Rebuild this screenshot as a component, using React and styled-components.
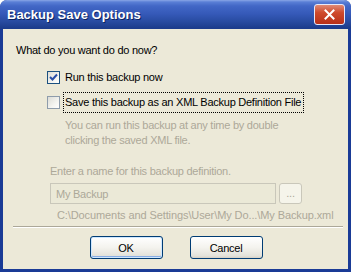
import React from 'react';
import styled, { createGlobalStyle } from 'styled-components';

const GlobalStyle = createGlobalStyle`
  html, body {
    margin: 0;
    padding: 0;
    background: #ffffff;
  }
  body {
    font-family: Tahoma, "Liberation Sans", "DejaVu Sans", sans-serif;
    font-size: 11px;
    letter-spacing: -0.25px;
    color: #000;
  }
`;

const Window = styled.div`
  width: 351px;
  height: 272px;
  box-sizing: border-box;
  display: flex;
  flex-direction: column;
  background: #1a3b96;
  border-radius: 7px 7px 0 0;
  overflow: hidden;
`;

const TitleBar = styled.div`
  height: 29px;
  flex-shrink: 0;
  display: flex;
  align-items: center;
  justify-content: space-between;
  padding: 0 6px 0 7px;
  background: linear-gradient(
    to bottom,
    #8aa6e6 0px,
    #5a7fd6 2px,
    #4267c6 6px,
    #3559b8 14px,
    #274a9f 22px,
    #1c3c8c 28px
  );
`;

const Title = styled.span`
  font-family: "Liberation Sans", "DejaVu Sans", sans-serif;
  font-weight: bold;
  font-size: 13px;
  letter-spacing: 0;
  color: #ffffff;
  text-shadow: 1px 1px 0 #0d2460;
`;

const CloseButton = styled.div`
  width: 31px;
  height: 21px;
  box-sizing: border-box;
  border: 1px solid #e8e8f8;
  border-radius: 3px;
  background: linear-gradient(to bottom, #e08a76 0%, #cf4a2c 40%, #b93018 100%);
  display: flex;
  align-items: center;
  justify-content: center;
`;

const Client = styled.div`
  flex: 1;
  margin: 0 3px 3px 3px;
  background: #ece9d8;
  display: flex;
  flex-direction: column;
  padding: 14px 0 0 10px;
`;

const Question = styled.div`
  line-height: 14px;
  margin-left: 3px;
`;

const Options = styled.div`
  margin: 11px 0 0 34px;
  display: flex;
  flex-direction: column;
  gap: 6px;
`;

const CheckRow = styled.div`
  display: flex;
  align-items: center;
  height: 19px;
`;

const Box = styled.div`
  width: 13px;
  height: 13px;
  box-sizing: border-box;
  border: 1px solid ${(p) => (p.$checked ? '#1c5180' : '#8e9cab')};
  background: linear-gradient(135deg, #dcdcd6 0%, #f4f4f0 60%, #ffffff 100%);
  display: flex;
  align-items: center;
  justify-content: center;
  flex-shrink: 0;
`;

const Label = styled.span`
  margin-left: 3px;
  padding: 2px 2px 3px 1px;
  line-height: 14px;
  border: 1px ${(p) => (p.$focused ? 'dotted #000' : 'solid transparent')};
`;

const Description = styled.div`
  color: #aca899;
  line-height: 15px;
  margin: 6px 0 0 52px;
  width: 240px;
`;

const NameSection = styled.div`
  margin: 16px 0 0 37px;
  display: flex;
  flex-direction: column;
`;

const GrayLabel = styled.div`
  color: #aca899;
  line-height: 14px;
`;

const InputRow = styled.div`
  display: flex;
  align-items: center;
  margin-top: 5px;
  gap: 3px;
`;

const NameInput = styled.div`
  width: 226px;
  height: 21px;
  box-sizing: border-box;
  border: 1px solid #c9c7ba;
  background: #ebe9d7;
  color: #aca899;
  padding: 0 5px;
  display: flex;
  align-items: center;
`;

const SmallButton = styled.div`
  width: 23px;
  height: 21px;
  box-sizing: border-box;
  border: 1px solid #c9c7ba;
  border-radius: 3px;
  background: #f5f4ea;
  color: #aca899;
  display: flex;
  align-items: center;
  justify-content: center;
  padding-bottom: 2px;
`;

const PathText = styled.div`
  color: #aca899;
  line-height: 14px;
  margin: 4px 0 0 7px;
  letter-spacing: -0.1px;
`;

const Separator = styled.div`
  height: 0;
  border-top: 1px solid #aca899;
  border-bottom: 1px solid #ffffff;
  margin: 4px 5px 0 0;
`;

const Footer = styled.div`
  display: flex;
  justify-content: center;
  gap: 27px;
  margin: 8px 0 0 -9px;
`;

const Button = styled.div`
  width: 73px;
  height: 23px;
  box-sizing: border-box;
  border: 1px solid #003c74;
  border-radius: 3px;
  background: linear-gradient(to bottom, #ffffff 0%, #f4f3ee 50%, #e3e2da 90%, #d6d0c5 100%);
  box-shadow: ${(p) =>
    p.$default
      ? 'inset 0 0 0 1px #cee7ff, inset 0 -1px 0 1px #89ade4'
      : 'none'};
  display: flex;
  align-items: center;
  justify-content: center;
`;

export default function App() {
  return (
    <>
      <GlobalStyle />
      <Window>
        <TitleBar>
          <Title>Backup Save Options</Title>
          <CloseButton>
            <svg width="11" height="11" viewBox="0 0 11 11">
              <path d="M1.5 1.5 L9.5 9.5 M9.5 1.5 L1.5 9.5" stroke="#ffffff" strokeWidth="2" strokeLinecap="square" />
            </svg>
          </CloseButton>
        </TitleBar>
        <Client>
          <Question>What do you want do do now?</Question>
          <Options>
            <CheckRow>
              <Box $checked>
                <svg width="9" height="9" viewBox="0 0 9 9">
                  <path d="M1 4 L3.5 6.5 L8 1.5" fill="none" stroke="#2a4fa8" strokeWidth="2" />
                </svg>
              </Box>
              <Label>Run this backup now</Label>
            </CheckRow>
            <CheckRow>
              <Box />
              <Label $focused>Save this backup as an XML Backup Definition File</Label>
            </CheckRow>
          </Options>
          <Description>
            You can run this backup at any time by double clicking the saved XML file.
          </Description>
          <NameSection>
            <GrayLabel>Enter a name for this backup definition.</GrayLabel>
            <InputRow>
              <NameInput>My Backup</NameInput>
              <SmallButton>...</SmallButton>
            </InputRow>
            <PathText>C:\Documents and Settings\User\My Do...\My Backup.xml</PathText>
          </NameSection>
          <Separator />
          <Footer>
            <Button $default>OK</Button>
            <Button>Cancel</Button>
          </Footer>
        </Client>
      </Window>
    </>
  );
}
